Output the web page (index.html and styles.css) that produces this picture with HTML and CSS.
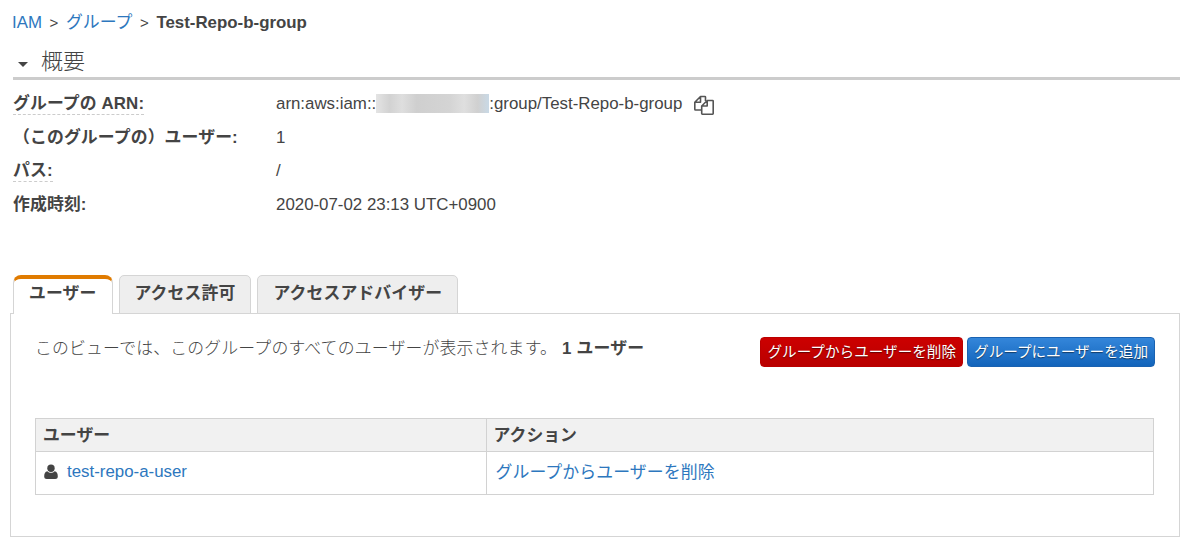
FILE: index.html
```html
<!DOCTYPE html>
<html lang="ja">
<head>
    <meta charset="UTF-8">
    <meta name="viewport" content="width=device-width, initial-scale=1.0">
    <title>IAM グループ</title>
    <link rel="stylesheet" href="styles.css">
</head>
<body>
    <nav class="breadcrumb">
        <a href="#">IAM</a>
        <span class="separator">&gt;</span>
        <a href="#">グループ</a>
        <span class="separator">&gt;</span>
        <strong>Test-Repo-b-group</strong>
    </nav>

    <h2 class="section-title"><span class="caret"></span>概要</h2>

    <dl class="summary">
        <dt><span class="hint">グループの ARN:</span></dt>
        <dd>
            <span>arn:aws:iam::</span><span class="masked"></span><span>:group/Test-Repo-b-group</span>
            <svg class="copy-icon" width="22" height="22" viewBox="0 0 22 22">
                <path d="M12.5 7V3.1Q12.5 2.5 11.9 2.5H7.5L1.8 8.2V15.3Q1.8 16 2.5 16H8.5M7.5 2.5V8.2H1.8"/>
                <path d="M14.2 6.5H19.6Q20.2 6.5 20.2 7.1V19.6Q20.2 20.2 19.6 20.2H9.3Q8.7 20.2 8.7 19.6V12Z M14.2 6.5V12H8.7"/>
            </svg>
        </dd>
        <dt>（このグループの）ユーザー:</dt>
        <dd>1</dd>
        <dt><span class="hint">パス:</span></dt>
        <dd>/</dd>
        <dt>作成時刻:</dt>
        <dd>2020-07-02 23:13 UTC+0900</dd>
    </dl>

    <div class="tabs">
        <div class="tab active">ユーザー</div>
        <div class="tab">アクセス許可</div>
        <div class="tab">アクセスアドバイザー</div>
    </div>

    <div class="panel">
        <div class="toolbar">
            <p class="description">このビューでは、このグループのすべてのユーザーが表示されます。<strong>1 ユーザー</strong></p>
            <div class="buttons">
                <button class="btn btn-danger">グループからユーザーを削除</button>
                <button class="btn btn-primary">グループにユーザーを追加</button>
            </div>
        </div>

        <table class="users">
            <thead>
                <tr>
                    <th class="col-user">ユーザー</th>
                    <th>アクション</th>
                </tr>
            </thead>
            <tbody>
                <tr>
                    <td>
                        <div class="user">
                            <svg width="14" height="16" viewBox="0 0 14 16">
                                <path d="M3.4 7.2C1 7.4 .2 9.6 .2 12.5C.2 14.2 1.2 15 2.7 15H11.3C12.8 15 13.8 14.2 13.8 12.5C13.8 9.6 13 7.4 10.6 7.2C9.6 8.2 8.4 8.7 7 8.7S4.4 8.2 3.4 7.2Z"/>
                                <circle cx="7" cy="4.3" r="3.7"/>
                            </svg>
                            <a href="#">test-repo-a-user</a>
                        </div>
                    </td>
                    <td class="action"><a href="#">グループからユーザーを削除</a></td>
                </tr>
            </tbody>
        </table>
    </div>
</body>
</html>
```

FILE: styles.css
```css
* {
    box-sizing: border-box;
}
body {
    margin: 0;
    padding: 10px 20px 0 10px;
    font-family: "Liberation Sans", "Noto Sans CJK JP", sans-serif;
    font-size: 16.87px;
    line-height: 26px;
    color: #444;
    background-color: #fff;
}
a {
    color: #2d77be;
    text-decoration: none;
}
.breadcrumb {
    display: flex;
    height: 26px;
    padding-left: 2px;
    white-space: nowrap;
}
.separator {
    width: 24px;
    text-align: center;
    font-size: 15px;
}
.section-title {
    display: flex;
    align-items: center;
    height: 44px;
    margin: 0 0 0 3px;
    padding-top: 11px;
    padding-left: 5px;
    border-bottom: 3px solid #ccc;
    font-size: 22px;
    font-weight: 300;
}
.caret {
    margin: 4px 13px 0 0;
    border-left: 5px solid transparent;
    border-right: 5px solid transparent;
    border-top: 5px solid #444;
}
.summary {
    display: grid;
    grid-template-columns: 263px 1fr;
    grid-auto-rows: 33.6px;
    align-items: center;
    margin: 7px 0 0 3px;
}
.summary dt {
    font-weight: bold;
    letter-spacing: 0.1px;
}
.summary dt:not(:first-child) {
    padding-top: 1px;
}
.summary dd {
    display: flex;
    align-items: center;
    margin: 0;
}
.summary dd:not(:nth-child(2)) {
    padding-top: 1px;
}
.hint {
    display: inline-block;
    height: 23px;
    line-height: 24px;
    border-bottom: 1px dashed #ccc;
}
.masked {
    width: 113px;
    height: 19px;
    background: linear-gradient(90deg, #e4e4e4, #d2d2d2 12%, #dedede 23%, #cfcfcf 36%, #d4d4d4 65%, #dfdfdf 78%, #d0d0d0 90%, #c9d9e6);
}
.copy-icon {
    margin: 2px 0 0 11px;
    fill: none;
    stroke: #555;
    stroke-width: 1.6;
    stroke-linejoin: round;
}
.tabs {
    display: flex;
    gap: 6px;
    height: 39px;
    margin-top: 54px;
    padding-left: 3px;
}
.tab {
    height: 39px;
    padding: 5px 15px 0;
    border: 1px solid #d5d5d5;
    border-radius: 5px 5px 0 0;
    background-color: #eee;
    font-weight: bold;
    letter-spacing: 0.1px;
}
.tab.active {
    padding: 2px 15px 0;
    border-top: 4px solid #e07b00;
    border-bottom: 0;
    border-radius: 8px 8px 0 0;
    background-color: #fff;
    z-index: 1;
}
.panel {
    height: 224px;
    margin-top: -1px;
    padding: 23px 25px 0 24px;
    border: 1px solid #d5d5d5;
}
.toolbar {
    display: flex;
    justify-content: space-between;
    height: 81px;
}
.description {
    margin: -1px 0 0;
    font-weight: 300;
    letter-spacing: 0.17px;
}
.description strong {
    margin-left: 5px;
    font-weight: 700;
}
.buttons {
    display: flex;
    gap: 4px;
    margin-right: -1px;
}
.btn {
    height: 30px;
    padding: 0 6px;
    border: 1px solid;
    border-radius: 4px;
    color: #fff;
    font-family: inherit;
    font-size: 14.6px;
    line-height: 26px;
    white-space: nowrap;
    text-shadow: 0 1px 1px rgba(0,0,0,0.5);
}
.btn-danger {
    border-color: #b00;
    background: linear-gradient(#c00, #b90000);
}
.btn-primary {
    border-color: #1a62b1;
    background: linear-gradient(#3486da, #1264bb);
}
.users {
    width: 100%;
    border-collapse: collapse;
    table-layout: fixed;
}
.users th, .users td {
    border: 1px solid #d2d2d2;
    padding: 0 7px;
    text-align: left;
}
.users th {
    height: 33px;
    padding-top: 1px;
    background-color: #f1f1f1;
}
.users td {
    height: 43px;
    padding-bottom: 2px;
    padding-left: 8px;
}
.users .action {
    padding-left: 9px;
    padding-bottom: 1px;
    letter-spacing: 0.1px;
}
.col-user {
    width: 450.5px;
}
.user {
    display: flex;
    align-items: center;
    gap: 9px;
    fill: #444;
}
```
